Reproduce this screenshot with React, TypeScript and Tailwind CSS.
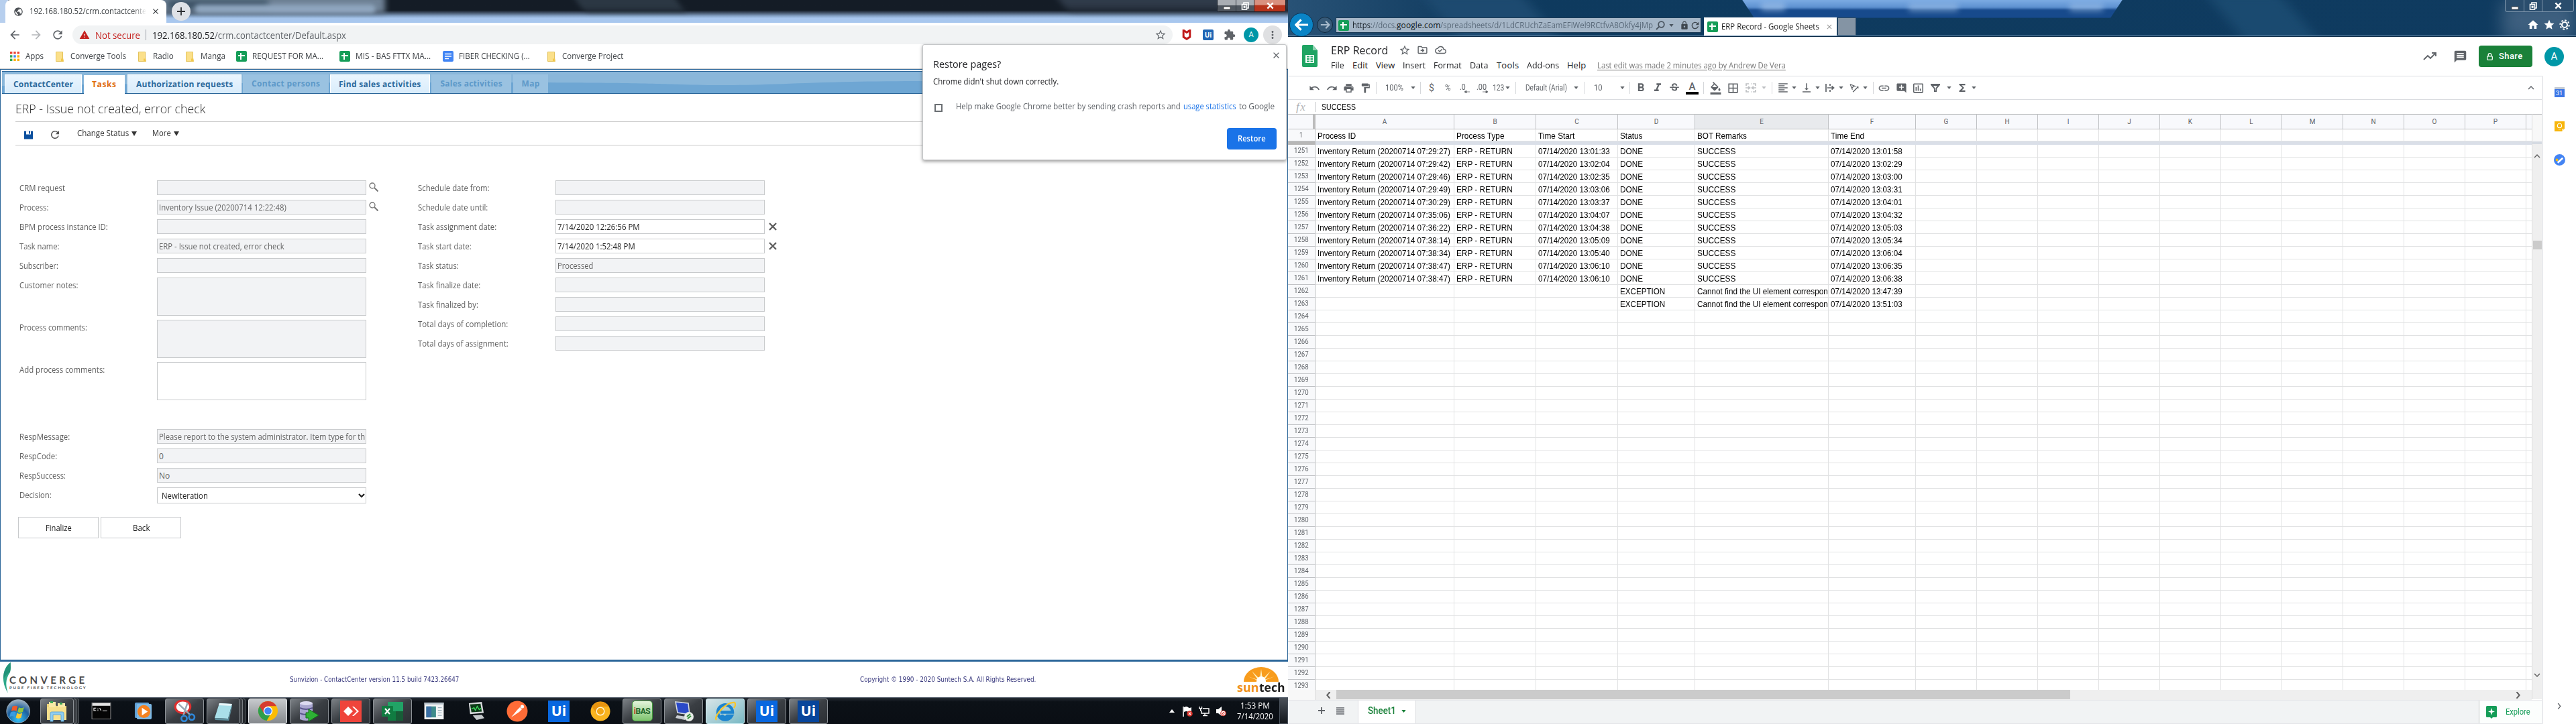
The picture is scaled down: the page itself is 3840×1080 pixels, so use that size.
import { useLayoutEffect, useRef, useState, type ReactNode } from "react";
import {
  MdAddComment,
  MdArrowBack,
  MdArrowForward,
  MdBorderAll,
  MdClose,
  MdComment,
  MdExtension,
  MdFormatAlignLeft,
  MdFormatBold,
  MdFormatColorFill,
  MdFormatItalic,
  MdFormatPaint,
  MdFunctions,
  MdHome,
  MdInsertChartOutlined,
  MdKeyboardArrowDown,
  MdKeyboardArrowUp,
  MdLink,
  MdLock,
  MdMoreVert,
  MdOutlineCloudDone,
  MdOutlineDriveFileMove,
  MdPrint,
  MdPublic,
  MdRedo,
  MdRefresh,
  MdStar,
  MdStarBorder,
  MdStrikethroughS,
  MdTextRotationAngleup,
  MdUndo,
  MdVerticalAlignBottom,
  MdWarning,
} from "react-icons/md";

/* Text run that is measured and condensed, or tracked out, to fill a given width. */
function T({ w, children, className = "" }: { w: number; children: string; className?: string }) {
  const ref = useRef<HTMLSpanElement>(null);
  const [natural, setNatural] = useState(0);
  useLayoutEffect(() => {
    if (ref.current) setNatural(ref.current.offsetWidth);
  }, [children]);
  const fit =
    natural > w
      ? { transform: `scaleX(${w / natural})` }
      : natural > 0
        ? { letterSpacing: (w - natural) / Math.max(1, children.length) }
        : undefined;
  return (
    <span className={`block shrink-0 whitespace-pre ${className}`} style={{ width: w }}>
      <span ref={ref} className="inline-block origin-left" style={fit}>
        {children}
      </span>
    </span>
  );
}

const Folder = () => (
  <svg viewBox="0 0 12 15" className="h-[15px] w-3 shrink-0">
    <path d="M0.5 0.5h10v11l1 3h-11z" fill="#fbe08a" stroke="#e3c25a" />
    <path d="M8 14.5v-4h3.5v4z" fill="#f2c84b" />
  </svg>
);
const SheetIcon = () => (
  <svg viewBox="0 0 16 16" className="size-4 shrink-0">
    <rect width="16" height="16" rx="2" fill="#159d58" />
    <path d="M7 3v10M3 7h10" stroke="#fff" strokeWidth="2" />
  </svg>
);
const DocIcon = () => (
  <svg viewBox="0 0 16 16" className="size-4 shrink-0">
    <rect width="16" height="16" rx="2" fill="#4285f4" />
    <path d="M3 4.5h10M3 8h10M3 11.5h6" stroke="#fff" strokeWidth="1.6" />
  </svg>
);
const UiIcon = ({ className }: { className: string }) => (
  <span className={`flex shrink-0 items-center justify-center font-['Open_Sans',sans-serif] font-bold text-white ${className}`}>Ui</span>
);

/* ---------- Chrome window ---------- */

function WindowButtons({ red }: { red: boolean }) {
  return (
    <div
      className={`flex h-[18px] w-[103px] overflow-hidden rounded-b-[4px] border border-t-0 ${
        red ? "border-[#1b222c] bg-[#8b9199]" : "border-[#7f97ad] bg-[#2a4d6d]"
      }`}
    >
      <span className={`flex w-[28px] items-center justify-center border-r ${red ? "border-[#30363e] bg-linear-to-b from-[#a9adb3] from-45% to-[#4f565f] to-50%" : "border-[#7f97ad]"}`}>
        <svg viewBox="0 0 12 12" className="size-3">
          <rect x="1" y="7" width="10" height="4" fill="#fff" stroke="#444" strokeWidth=".8" />
        </svg>
      </span>
      <span className={`flex w-[27px] items-center justify-center border-r ${red ? "border-[#30363e] bg-linear-to-b from-[#a9adb3] from-45% to-[#4f565f] to-50%" : "border-[#7f97ad]"}`}>
        <svg viewBox="0 0 12 12" className="size-3" fill="none" stroke="#fff" strokeWidth="1.6">
          <path d="M4 3V1h7v8H9" />
          <rect x="1.5" y="3.5" width="7" height="7.5" />
          <rect x="4.4" y="6.4" width="1.4" height="1.6" />
        </svg>
      </span>
      <span className={`flex flex-1 items-center justify-center ${red ? "bg-linear-to-b from-[#d9907f] from-40% to-[#b7331b] to-50%" : ""}`}>
        <svg viewBox="0 0 12 12" className="size-[11px]">
          <path d="M1.5 1.5l9 9M10.500 1.500l-9 9" stroke="#fff" strokeWidth="2.6" />
        </svg>
      </span>
    </div>
  );
}

function ChromeTitle() {
  return (
    <div className="relative flex h-[34px] overflow-hidden bg-linear-to-b from-[#141c26] from-45% via-[#86a3c6] via-70% to-[#a8c7ee] to-80%">
      <div className="absolute -left-4 -top-2 h-[28px] w-[590px] bg-[#6f8296] blur-[4px]" />
      <div className="absolute left-[250px] top-0 h-[14px] w-[150px] bg-[#3a5164] blur-[5px]" />
      <div className="absolute left-[290px] top-[7px] h-[13px] w-[270px] rounded-full bg-[#8fa6bf] blur-[3px]" />
      <div className="absolute -top-3 left-[860px] h-[28px] w-[150px] skew-x-[35deg] bg-[#2b3743] blur-[5px]" />
      <div className="absolute -top-3 left-[1580px] h-[26px] w-[340px] skew-x-[35deg] bg-[#303b4a] blur-[6px]" />
      <div className="absolute -left-2 top-0 h-[34px] w-[20px] bg-[#b7cfee]" />
      <div className="relative ml-2 flex w-[240px] items-center rounded-t-[8px] bg-white pl-3">
        <MdPublic className="size-[15px] text-[#4d5156]" />
        <div className="relative ml-[9px]">
          <T w={174} className="text-[12px] text-[#3c4043]">192.168.180.52/crm.contactcente</T>
          <div className="absolute right-0 top-0 h-full w-5 bg-linear-to-r from-transparent to-white" />
        </div>
        <MdClose className="ml-[7px] size-[14px] text-[#3c4043]" />
      </div>
      <span className="relative ml-2 mt-[3px] flex size-7 items-center justify-center rounded-full bg-[#dfe2e7]">
        <svg viewBox="0 0 12 12" className="size-3">
          <path d="M6 0v12M0 6h12" stroke="#2b2e31" strokeWidth="1.8" />
        </svg>
      </span>
      <div className="relative ml-auto mr-[3px]">
        <WindowButtons red />
      </div>
    </div>
  );
}

function ChromeToolbar() {
  return (
    <div className="flex h-8 items-center bg-white pl-3 pt-1 text-[#5f6368]">
      <MdArrowBack className="size-5" />
      <MdArrowForward className="ml-3 size-5 text-[#b4b6b9]" />
      <MdRefresh className="ml-3 size-5" />
      <div className="ml-3 flex h-7 w-[1640px] items-center rounded-full bg-[#f1f3f4] pl-[10px] text-[14px]">
        <MdWarning className="size-4 text-[#c5221f]" />
        <T w={67} className="ml-2 text-[#c5221f]">Not secure</T>
        <span className="ml-2 h-4 w-px bg-[#9aa0a6]" />
        <T w={93} className="ml-[9px] text-[#202124]">192.168.180.52</T>
        <T w={196}>/crm.contactcenter/Default.aspx</T>
        <MdStarBorder className="ml-auto mr-[9px] size-[18px]" />
      </div>
      <svg viewBox="0 0 16 18" className="ml-[14px] h-[16px] w-[14px]">
        <path d="M2.500 1v11.500l5.500 3.500 5.500-3.500V1L8 5z" fill="none" stroke="#c01818" strokeWidth="3.4" />
      </svg>
      <UiIcon className="ml-[17px] size-4 rounded-[2px] bg-[#1f66b5] text-[10px]" />
      <MdExtension className="ml-[15px] size-[18px]" />
      <span className="ml-3 flex size-[22px] items-center justify-center rounded-full bg-[#0097a7] font-['Roboto',sans-serif] text-[11px] text-white">A</span>
      <span className="ml-[7px] flex size-7 items-center justify-center rounded-full bg-[#dfe0e2]">
        <MdMoreVert className="size-[18px]" />
      </span>
    </div>
  );
}

function Bookmarks() {
  return (
    <div className="flex h-9 shrink-0 items-center bg-white pl-[15px] text-[12px] text-[#3f4347]">
      <svg viewBox="0 0 14 14" className="size-[14px]">
        <g fill="#ea4335"><rect width="3.400" height="3.400" /><rect x="5.300" width="3.400" height="3.400" /><rect x="10.600" width="3.400" height="3.400" /></g>
        <rect y="5.300" width="3.400" height="3.400" fill="#34a853" />
        <rect x="5.300" y="5.300" width="3.400" height="3.400" fill="#4285f4" />
        <rect x="10.600" y="5.300" width="3.400" height="3.400" fill="#fbaf04" />
        <rect y="10.600" width="3.400" height="3.400" fill="#34a853" />
        <rect x="5.300" y="10.600" width="3.400" height="3.400" fill="#fbaf04" />
        <rect x="10.600" y="10.600" width="3.400" height="3.400" fill="#fbaf04" />
      </svg>
      <T w={27} className="ml-[9px]">Apps</T>
      <span className="ml-[18px]"><Folder /></span>
      <T w={83} className="ml-[10px]">Converge Tools</T>
      <span className="ml-[18px]"><Folder /></span>
      <T w={31} className="ml-[10px]">Radio</T>
      <span className="ml-[18px]"><Folder /></span>
      <T w={37} className="ml-[10px]">Manga</T>
      <span className="ml-4"><SheetIcon /></span>
      <T w={106} className="ml-2">REQUEST FOR MA...</T>
      <span className="ml-6"><SheetIcon /></span>
      <T w={112} className="ml-2">MIS - BAS FTTX MA...</T>
      <span className="ml-[18px]"><DocIcon /></span>
      <T w={106} className="ml-2">FIBER CHECKING (...</T>
      <span className="ml-[26px]"><Folder /></span>
      <T w={91} className="ml-[10px]">Converge Project</T>
    </div>
  );
}

function RestorePopup() {
  return (
    <div className="absolute left-[1375px] top-[66px] flex h-[173px] w-[543px] flex-col rounded-[3px] border border-[#c4c6c8] bg-white pl-[15px] text-[#202124] shadow-[0_2px_5px_rgba(0,0,0,0.4)]">
      <MdClose className="absolute right-[7px] top-2 size-[15px] text-[#5f6368]" />
      <T w={101} className="mt-[16px] text-[15px] leading-6">Restore pages?</T>
      <T w={187} className="mt-[5px] text-[12.5px] leading-5">Chrome didn't shut down correctly.</T>
      <div className="mt-[17px] flex items-center text-[12px] leading-5 text-[#5f6368]">
        <span className="ml-[2px] mt-1 h-[12px] w-[12px] border-2 border-[#6b6f73]" />
        <T w={335} className="ml-5">Help make Google Chrome better by sending crash reports and</T>
        <T w={79} className="ml-1 text-[#1a73e8]">usage statistics</T>
        <T w={53} className="ml-1">to Google</T>
      </div>
      <button className="ml-[438px] mt-[22px] flex h-8 w-[74px] items-center justify-center rounded-[4px] bg-[#1a73e8] text-[12px] font-semibold text-white">
        <T w={42}>Restore</T>
      </button>
    </div>
  );
}

/* ---------- ContactCenter page ---------- */

const navOn = "bg-linear-to-b from-[#eaf5fe] to-[#d9ecfb] text-[#2c6a9c] border border-b-0 border-white h-[28px]";
const navOff = "bg-[#9ac2e1] text-[#5d99c9] h-[28px]";

function NavTabs() {
  return (
    <div className="relative mx-[2px] mt-[2px] flex h-[34px] items-end border-y border-[#2b6699] bg-[#8ab7da] pl-1 text-[12px] font-bold">
      <svg viewBox="0 0 1915 32" preserveAspectRatio="none" className="absolute left-0 top-0 h-8 w-full">
        <path d="M0 21C300 16 500 16 750 16S1000 20 1080 20s130-6 300-6 300 4 535 4V32H0z" fill="#6ea6d3" />
      </svg>
      <span className={`relative flex w-[115px] items-center justify-center ${navOn}`}><T w={89}>ContactCenter</T></span>
      <span className="relative -mb-px ml-[3px] flex h-[28px] w-[61px] items-center justify-center bg-white text-[#e06c10]"><T w={37}>Tasks</T></span>
      <span className={`relative ml-1 flex w-[170px] items-center justify-center ${navOn}`}><T w={144}>Authorization requests</T></span>
      <span className={`relative ml-[2px] flex w-[128px] items-center justify-center ${navOff}`}><T w={102}>Contact persons</T></span>
      <span className={`relative ml-[2px] flex w-[149px] items-center justify-center ${navOn}`}><T w={123}>Find sales activities</T></span>
      <span className={`relative ml-[2px] flex w-[119px] items-center justify-center ${navOff}`}><T w={92}>Sales activities</T></span>
      <span className={`relative ml-[3px] flex w-[52px] items-center justify-center ${navOff}`}><T w={27}>Map</T></span>
    </div>
  );
}

function Field({ label, lw, value, vw = 0, kind = "ro", after }: { label: string; lw: number; value?: string; vw?: number; kind?: "ro" | "rw" | "area" | "areaRw" | "select"; after?: ReactNode }) {
  const tall = kind === "area" || kind === "areaRw";
  const white = kind === "rw" || kind === "areaRw" || kind === "select";
  return (
    <div className={`flex items-start ${tall ? "mb-[6px] h-[57px]" : kind === "select" ? "h-6" : "mb-[7px] h-[22px]"}`}>
      <div className="w-[205px] leading-[23px] text-[#5e5e5e]"><T w={lw}>{label}</T></div>
      <div
        className={`flex h-full w-[312px] overflow-hidden border border-[#c8cacc] pl-[2px] pr-px leading-[21px] ${
          white ? "bg-white text-[#1c1c1c]" : "bg-[#f2f3f5] text-[#646464]"
        } ${kind === "select" ? "items-center pl-[6px] pr-[5px]" : ""}`}
      >
        {value && <T w={vw}>{value}</T>}
        {kind === "select" && (
          <svg viewBox="0 0 10 7" className="ml-auto h-[7px] w-[10px]"><path d="M1 1l4 4 4-4" fill="none" stroke="#1c1c1c" strokeWidth="2.2" /></svg>
        )}
      </div>
      {after}
    </div>
  );
}

const Glass = () => (
  <svg viewBox="0 0 14 14" className="ml-1 mt-[3px] size-[14px]" fill="none" stroke="#777">
    <circle cx="5" cy="5" r="4" strokeWidth="1.300" />
    <path d="M8 8l5.500 5.500" strokeWidth="2" />
  </svg>
);
const Cross = () => (
  <svg viewBox="0 0 12 12" className="ml-[6px] mt-[5px] size-[12px]"><path d="M1 1l10 10M11 1L1 11" stroke="#5e5e5e" strokeWidth="2.400" /></svg>
);

function TaskPage() {
  return (
    <div className="flex h-[884px] flex-col border border-b-[3px] border-[#2b6699] bg-white">
      <NavTabs />
      <div className="mx-[22px] flex h-[41px] items-center pt-[4px] text-[18px] font-light text-[#2e2e2e]">
        <T w={283}>ERP - Issue not created, error check</T>
      </div>
      <div className="mx-[22px] flex h-9 items-center border-y border-[#cacaca] pl-[13px] text-[12px] text-[#333]">
        <svg viewBox="0 0 13 12" className="mt-1 h-[13px] w-[13px]"><path d="M0 0h13v12H0z" fill="#0b4f9e" /><path d="M3 0h7v5H3z" fill="#fff" /><path d="M7 0h2v4H7z" fill="#0b4f9e" /></svg>
        <MdRefresh className="ml-6 mt-1 size-[18px] text-[#555]" />
        <T w={77} className="ml-6">Change Status</T>
        <svg viewBox="0 0 8 7" className="ml-1 h-[7px] w-2"><path d="M0 0h8L4 7z" fill="#333" /></svg>
        <T w={28} className="ml-[23px]">More</T>
        <svg viewBox="0 0 8 7" className="ml-1 h-[7px] w-2"><path d="M0 0h8L4 7z" fill="#333" /></svg>
      </div>
      <div className="ml-7 mt-[52px] flex text-[12px]">
        <div className="w-[594px]">
          <Field label="CRM request" lw={68} after={<Glass />} />
          <Field label="Process:" lw={43} value="Inventory Issue (20200714 12:22:48)" vw={190} after={<Glass />} />
          <Field label="BPM process instance ID:" lw={132} />
          <Field label="Task name:" lw={59} value="ERP - Issue not created, error check" vw={187} />
          <Field label="Subscriber:" lw={58} />
          <Field label="Customer notes:" lw={87} kind="area" />
          <Field label="Process comments:" lw={101} kind="area" />
          <Field label="Add process comments:" lw={127} kind="areaRw" />
          <div className="mt-[43px]">
            <Field label="RespMessage:" lw={75} value="Please report to the system administrator. Item type for th" vw={307} />
            <Field label="RespCode:" lw={56} value="0" vw={7} />
            <Field label="RespSuccess:" lw={69} value="No" vw={16} />
            <Field label="Decision:" lw={48} value="NewIteration" vw={69} kind="select" />
          </div>
          <div className="-ml-[2px] mt-5 flex gap-[3px] text-[#1c1c1c]">
            <button className="flex h-8 w-[120px] items-center justify-center border border-[#c8cacc] pt-[2px]"><T w={39}>Finalize</T></button>
            <button className="flex h-8 w-[120px] items-center justify-center border border-[#c8cacc] pt-[2px]"><T w={25}>Back</T></button>
          </div>
        </div>
        <div>
          <Field label="Schedule date from:" lw={107} />
          <Field label="Schedule date until:" lw={104} />
          <Field label="Task assignment date:" lw={117} value="7/14/2020 12:26:56 PM" vw={123} kind="rw" after={<Cross />} />
          <Field label="Task start date:" lw={80} value="7/14/2020 1:52:48 PM" vw={116} kind="rw" after={<Cross />} />
          <Field label="Task status:" lw={61} value="Processed" vw={53} />
          <Field label="Task finalize date:" lw={93} />
          <Field label="Task finalized by:" lw={90} />
          <Field label="Total days of completion:" lw={134} />
          <Field label="Total days of assignment:" lw={135} />
        </div>
      </div>
    </div>
  );
}

function PageFooter() {
  return (
    <div className="flex h-[53px] items-start bg-white font-['DejaVu_Sans_Condensed','DejaVu_Sans',sans-serif] text-[10.500px] text-[#39397e]">
      <svg viewBox="0 0 15 48" className="ml-[2px] mt-[1px] h-[46px] w-[15px]">
        <path d="M14 0C2 8-2 30 10 48 6 36 6 26 13 16 15 10 14 5 14 0z" fill="#2fa98a" />
        <path d="M14 0C6 6 2 18 3 26c3-6 7-9 10-11 2-5 1-10 1-15z" fill="#157e68" opacity=".5" />
      </svg>
      <div className="-ml-[3px] mt-[20px] flex w-[114px] flex-col text-[#4a4a4a]">
        <T w={116} className="font-['Lato',sans-serif] text-[15px] font-bold leading-[15px]">CONVERGE</T>
        <T w={116} className="font-['Lato',sans-serif] text-[6px] font-bold leading-[7px]">PURE FIBER TECHNOLOGY</T>
      </div>
      <T w={252} className="ml-[304px] mt-[19px]">Sunvizion - ContactCenter version 11.5 build 7423.26647</T>
      <T w={262} className="ml-[598px] mt-[19px]">Copyright © 1990 - 2020 Suntech S.A. All Rights Reserved.</T>
      <div className="ml-auto mr-1 mt-2 flex flex-col items-center">
        <svg viewBox="0 0 52 22" className="h-[22px] w-[52px]">
          <path d="M0 22a26 22 0 0 1 52 0z" fill="#f89c1c" />
          <path d="M26 22L6 14l15 5L12 6l12 12 2-15 2 15L40 6l-9 13 15-5z" fill="#fff3c4" />
          <circle cx="26" cy="21" r="7" fill="#fff" />
        </svg>
        <div className="-mt-[2px] flex font-['Open_Sans',sans-serif] text-[18px] font-bold leading-[20px]">
          <T w={33} className="text-[#f0901a]">sun</T>
          <T w={39} className="text-[#1c1c1c]">tech</T>
        </div>
      </div>
    </div>
  );
}

/* ---------- Windows 7 taskbar ---------- */

function Slot({ mode = "none", stack = false, children }: { mode?: "none" | "open" | "active" | "ie"; stack?: boolean; children: ReactNode }) {
  const look =
    mode === "active"
      ? "border border-[#e8ebee] bg-linear-to-b from-[#c7cacd] to-[#85898d]"
      : mode === "ie"
        ? "border border-[#cfeef4] bg-linear-to-br from-[#d7e4e8] to-[#79b9c4]"
        : mode === "open"
          ? "border border-[#8c9196] bg-linear-to-br from-[#7c8186] via-[#3a3e43] via-50% to-[#2b2f34]"
          : "";
  return (
    <div className="flex h-[38px] w-[58px] shrink-0">
      <div className={`flex flex-1 items-center justify-center rounded-[3px] ${look}`}>{children}</div>
      {stack && (
        <>
          <div className="w-1 rounded-r-[3px] border border-l-0 border-[#777c81] bg-[#3a3e43]" />
          <div className="w-1 rounded-r-[3px] border border-l-0 border-[#5b6065] bg-[#24282d]" />
        </>
      )}
    </div>
  );
}

function Taskbar() {
  return (
    <div className="flex h-10 items-center gap-1 overflow-hidden border-t border-[#5b6470] bg-linear-to-b from-[#272d36] from-0% via-[#0c1117] via-15% to-[#0a0e14] pl-[6px]">
      <div className="mr-[6px] w-11 shrink-0">
        <svg viewBox="0 0 44 44" className="h-[38px] w-11">
          <defs>
            <radialGradient id="orb" cx="50%" cy="85%" r="80%">
              <stop offset="0" stopColor="#35c0f4" />
              <stop offset=".6" stopColor="#1c5f9e" />
              <stop offset="1" stopColor="#93a9bd" />
            </radialGradient>
          </defs>
          <circle cx="21" cy="22" r="20" fill="url(#orb)" stroke="#a7bccb" />
          <path d="M11 14q5-3 9 0l-2 8q-4-3-9 0z" fill="#ef5a2a" />
          <path d="M22 15q4 3 9 0l-2 8q-5 3-9 0z" fill="#8fc63d" />
          <path d="M8 24q5-3 9 0l-2 8q-4-3-9 0z" fill="#3a9be0" />
          <path d="M19 25q4 3 9 0l-2 8q-5 3-9 0z" fill="#fdc82f" />
        </svg>
      </div>
      <Slot mode="open" stack>
        <svg viewBox="0 0 32 32" className="size-8">
          <path d="M1 5h12l2 3h15v21H1z" fill="#f0d57b" />
          <path d="M4 2h10v8H4zM17 4h11v8H17z" fill="#f9e9a6" />
          <path d="M6 1h4v3H6zM20 3h4v3h-4z" fill="#3aa655" />
          <path d="M1 10h29v19H1z" fill="#f7e08c" />
          <path d="M6 31V19q0-2 2-2h16q2 0 2 2v12h-4V21H10v10z" fill="#8fcdf0" stroke="#5fa8d8" />
        </svg>
      </Slot>
      <Slot>
        <svg viewBox="0 0 30 26" className="h-[25px] w-[30px]">
          <rect x=".5" y=".5" width="29" height="25" fill="#050505" stroke="#8d8d8d" />
          <rect x="1" y="1" width="28" height="4" fill="#e3e3e3" />
          <path d="M7 8.500H3.500v4H7M9 10h1.500M9 12.500h1.500M12.500 8.500l2 4M17 13h7" stroke="#fff" strokeWidth="1.100" fill="none" />
        </svg>
      </Slot>
      <Slot>
        <svg viewBox="0 0 28 28" className="size-[27px]">
          <rect x="1" y="1" width="22" height="24" rx="2" fill="#5f9fd4" />
          <rect x="4" y="3" width="23" height="24" rx="2" fill="#7db8e4" />
          <circle cx="15" cy="15" r="10" fill="#f58220" />
          <path d="M12 9l9 6-9 6z" fill="#fff" />
        </svg>
      </Slot>
      <Slot mode="open">
        <svg viewBox="0 0 32 32" className="size-[33px]">
          <ellipse cx="13" cy="10" rx="11" ry="9" fill="#fff" stroke="#dd2f2f" strokeWidth="3" />
          <path d="M7 6l17 16M20 4L14 22" stroke="#9aa7b2" strokeWidth="2.400" />
          <circle cx="26" cy="25" r="4" fill="none" stroke="#2f86d6" strokeWidth="2.600" />
          <circle cx="15" cy="27" r="4" fill="none" stroke="#2f86d6" strokeWidth="2.600" />
        </svg>
      </Slot>
      <Slot mode="open" stack>
        <svg viewBox="0 0 30 30" className="size-[30px]">
          <path d="M9 3l19 1-6 22-20-1z" fill="#a9dfe9" />
          <path d="M9 3l19 1-1 3-19-1z" fill="#e9f5f8" />
          <path d="M2 25l20 1 6-22v4l-5 21-20-1z" fill="#5b8e9c" />
        </svg>
      </Slot>
      <Slot mode="active">
        <svg viewBox="0 0 32 32" className="size-[31px]">
          <circle cx="16" cy="16" r="15" fill="#fbbc05" />
          <path d="M16 16L3 8.500A15 15 0 0 0 14 31l7-12z" fill="#2f9e4b" />
          <path d="M3 8.500l6.500 11 6-11H29A15 15 0 0 0 3 8.500z" fill="#d63b2f" />
          <circle cx="16" cy="16" r="7" fill="#fff" />
          <circle cx="16" cy="16" r="5.500" fill="#4285f4" />
        </svg>
      </Slot>
      <Slot mode="open">
        <svg viewBox="0 0 32 32" className="size-8">
          <path d="M2 4v24q9 4 19 0V4z" fill="#a9a6cf" />
          <ellipse cx="11.500" cy="4" rx="9.500" ry="3" fill="#dcdaf0" />
          <path d="M2 11q9 4 19 0M2 19q9 4 19 0" stroke="#5a568c" strokeWidth="2" fill="none" />
          <path d="M15 13l15 9-15 9v-5h-4v-8h4z" fill="#2eb135" stroke="#127018" />
        </svg>
      </Slot>
      <Slot mode="open">
        <svg viewBox="0 0 32 32" className="size-8">
          <rect width="32" height="32" fill="#ef443b" />
          <path d="M12 9l7 7-7 7-7-7zM18 9l2.500 0L28 16l-7.500 7H18l7-7z" fill="#fff" />
        </svg>
      </Slot>
      <Slot mode="open">
        <svg viewBox="0 0 32 30" className="h-[30px] w-8">
          <rect x="9" y="1" width="23" height="28" rx="1" fill="#21a366" />
          <path d="M9 15h12v14H9z" fill="#107c41" /><path d="M21 15h11v14H21z" fill="#185c37" />
          <rect y="7" width="17" height="16" rx="1" fill="#107c41" />
          <path d="M5 11l7 8M12 11l-7 8" stroke="#fff" strokeWidth="2.200" />
        </svg>
      </Slot>
      <Slot>
        <svg viewBox="0 0 30 26" className="h-[25px] w-[30px]">
          <rect width="30" height="26" fill="#f2f4f5" /><rect width="30" height="3" fill="#b8c3cc" />
          <rect x="3" y="6" width="15" height="17" fill="#3e8b8b" /><rect x="3" y="6" width="8" height="17" fill="#3a6ea5" />
          <path d="M21 8h6M21 12h6M21 16h6M21 20h6" stroke="#8aa0b0" />
        </svg>
      </Slot>
      <Slot>
        <svg viewBox="0 0 30 30" className="size-[29px]">
          <path d="M4 3l20-2 3 17-21 2z" fill="#d7dadc" /><path d="M6 5l16-1 2 12-16 1z" fill="#0d3b18" />
          <path d="M8 12l4-2 2 4 3-6 3 5 3-2" stroke="#3edc5c" fill="none" strokeWidth="1.400" />
          <path d="M10 22l14-1 4 5-12 3z" fill="#c4c8cb" />
        </svg>
      </Slot>
      <Slot>
        <svg viewBox="0 0 32 32" className="size-8">
          <circle cx="16" cy="16" r="15.500" fill="#ff6c37" />
          <path d="M7 25l9-11 3 3zM16 14l4-4 3 3-4 4z" fill="#fff" /><circle cx="23.500" cy="9" r="2.600" fill="#fff" />
        </svg>
      </Slot>
      <Slot><UiIcon className="size-8 bg-[#0867df] text-[21px]" /></Slot>
      <Slot>
        <svg viewBox="0 0 32 32" className="size-[30px]">
          <circle cx="16" cy="16" r="15.500" fill="#f9b41f" />
          <path d="M16 8.500h13.500A15.500 15.500 0 0 0 2.600 8.500l7 11z" fill="#e79410" />
          <circle cx="16" cy="16" r="7" fill="#fff3d0" /><circle cx="16" cy="16" r="5.400" fill="#f2a614" />
        </svg>
      </Slot>
      <Slot mode="open">
        <span className="flex size-[31px] items-center justify-center rounded-[5px] border border-[#3f9a3a] bg-linear-to-b from-[#e4f5dc] to-[#7cc36c] font-['Roboto',sans-serif] text-[12px] font-bold tracking-[-0.500px] text-[#22662a]">
          <span className="text-[#c0392b]">i</span>BAS
        </span>
      </Slot>
      <Slot mode="open">
        <svg viewBox="0 0 32 32" className="size-8">
          <path d="M4 2l19 2 2 17-18-3z" fill="#2a49c8" stroke="#d5dae0" strokeWidth="1.600" />
          <path d="M6 22l14 2-2 5-14-3z" fill="#c9cdd2" />
          <circle cx="24" cy="24" r="7" fill="#e6ebe6" /><path d="M21 24l5-4M22 27l5-4" stroke="#2f8d35" strokeWidth="2" />
        </svg>
      </Slot>
      <Slot mode="ie">
        <svg viewBox="0 0 32 32" className="size-8" fill="none">
          <path d="M9 17.500h18A11 11 0 1 0 25.500 23H19a4.500 4.500 0 0 1-8-2" stroke="#1c84cf" strokeWidth="4.500" />
          <path d="M3 29C-2 24 18 1 30 3c3 3-1 8-1 8" stroke="#f7c52c" strokeWidth="2.400" />
        </svg>
      </Slot>
      <Slot mode="open"><UiIcon className="size-8 bg-[#0867df] text-[21px]" /></Slot>
      <Slot mode="open"><UiIcon className="size-8 bg-[#07459b] text-[21px]" /></Slot>
      <div className="ml-auto flex h-full items-center text-white">
        <svg viewBox="0 0 8 5" className="h-[5px] w-2"><path d="M0 5l4-5 4 5z" fill="#fff" /></svg>
        <svg viewBox="0 0 16 16" className="ml-[11px] size-[16px]">
          <path d="M2 1v15" stroke="#fff" strokeWidth="1.600" /><path d="M3 2q4-2 6 0t5 0v7q-3 2-5 0T3 9z" fill="#fff" />
          <circle cx="11.500" cy="11.500" r="4.300" fill="#d8322a" /><path d="M9.800 9.800l3.400 3.400M13.200 9.800l-3.400 3.400" stroke="#fff" strokeWidth="1.200" />
        </svg>
        <svg viewBox="0 0 16 16" className="ml-[9px] size-[16px]" fill="none" stroke="#fff" strokeWidth="1.400">
          <path d="M6 4h9v7H4V7M9 11v3M6 14.500h7M1 1v3h3.500V1M2.700 4v4" />
        </svg>
        <svg viewBox="0 0 16 16" className="ml-[9px] size-[16px]">
          <path d="M1 5h3l5-4v14l-5-4H1z" fill="#fff" /><circle cx="11.500" cy="11" r="4.300" fill="#d8322a" /><circle cx="11.500" cy="11" r="2.600" fill="none" stroke="#fff" strokeWidth="1.100" /><path d="M9.700 9.200l3.600 3.600" stroke="#fff" strokeWidth="1.100" />
        </svg>
        <div className="ml-[15px] flex w-[55px] flex-col items-center text-[12px] leading-[16px]">
          <T w={44}>1:53 PM</T>
          <T w={54}>7/14/2020</T>
        </div>
        <div className="ml-[9px] h-full w-[13px] border border-[#4a525c] bg-linear-to-b from-[#4a5058] to-[#14181d]" />
      </div>
    </div>
  );
}

function LeftScreen() {
  return (
    <div className="relative flex h-[1080px] w-[1920px] shrink-0 flex-col overflow-hidden bg-white">
      <ChromeTitle />
      <ChromeToolbar />
      <Bookmarks />
      <div className="h-px bg-[#c9cbcd]" />
      <TaskPage />
      <PageFooter />
      <Taskbar />
      <RestorePopup />
    </div>
  );
}

/* ---------- Internet Explorer window ---------- */

function IeChrome() {
  return (
    <div className="relative flex h-[55px] items-end overflow-hidden border-b border-[#0c2c48] bg-linear-to-r from-[#285276] via-[#0e3a5e] via-15% to-[#0f3b60]">
      <div className="absolute -top-4 left-[230px] h-[90px] w-[150px] skew-x-[40deg] bg-[#1d4a70] blur-[10px]" />
      <div className="absolute -top-4 left-[1400px] h-[90px] w-[110px] skew-x-[40deg] bg-[#1a4a70] blur-[10px]" />
      <div className="absolute -top-2 left-[672px] h-[35px] w-[577px] bg-linear-to-b from-[#7aaae2] from-25% via-[#5c90d0] via-55% to-[#174a8c] to-65% [clip-path:polygon(0_0,100%_0,96%_100%,4%_100%)] blur-[1px]" />
      <div className="absolute left-[705px] top-[4px] h-3 w-[36px] rounded bg-[#a9c8ec] opacity-60 blur-[4px]" />
      <div className="absolute left-[925px] top-[5px] h-3 w-[74px] rounded bg-[#a9c8ec] opacity-50 blur-[4px]" />
      <div className="absolute left-[1165px] top-[5px] h-3 w-[50px] rounded bg-[#a9c8ec] opacity-50 blur-[4px]" />
      <div className="absolute right-0 top-0 h-[60px] w-[110px] bg-[#5d7894] opacity-60 blur-[12px]" />
      <div className="absolute right-[3px] top-0"><WindowButtons red={false} /></div>
      <div className="relative flex h-[35px] w-full items-start border-b border-[#6f93b4]">
        <span className="ml-[2px] flex size-9 items-center justify-center rounded-full border border-[#0c3455] bg-[#0a84c6]">
          <svg viewBox="0 0 22 18" className="h-[18px] w-[21px]"><path d="M10 1L2 9l8 8M2 9h19" fill="none" stroke="#fff" strokeWidth="3.400" /></svg>
        </span>
        <span className="ml-[5px] mt-[6px] flex size-[24px] items-center justify-center rounded-full border border-[#10283d] bg-[#375a78]">
          <svg viewBox="0 0 22 18" className="h-[12px] w-[15px]"><path d="M12 1l8 8-8 8M20 9H1" fill="none" stroke="#a9bccd" strokeWidth="3.200" /></svg>
        </span>
        <div className="ml-1 mt-[7px] flex h-[23px] w-[545px] items-center border border-[#1a3a56] bg-[#a6b7c8] pl-[3px] text-[12px] text-[#5a6a7a]">
          <SheetIcon />
          <T w={27} className="ml-[5px] text-[#101820]">https</T>
          <T w={39}>://docs.</T>
          <T w={65} className="text-[#101820]">google.com</T>
          <T w={317}>/spreadsheets/d/1LdCRUchZaEamEFiWel9RCtfvA8Okfy4jMp</T>
          <svg viewBox="0 0 14 14" className="ml-1 size-[14px]" fill="none" stroke="#4a5560" strokeWidth="1.800"><circle cx="8.500" cy="5.500" r="4.300" /><path d="M5.500 8.500L1 13" /></svg>
          <svg viewBox="0 0 8 5" className="ml-[6px] h-[4px] w-[7px]"><path d="M0 0h8L4 5z" fill="#4a5560" /></svg>
          <MdLock className="ml-[9px] size-[14px] text-[#3f4850]" />
          <MdRefresh className="ml-px size-[16px] text-[#3f4850]" />
        </div>
        <div className="ml-[4px] mt-[7px] flex h-[27px] w-[198px] items-center bg-white pl-[5px] text-[12px] text-[#1c1c1c]">
          <SheetIcon />
          <T w={146} className="ml-[5px]">ERP Record - Google Sheets</T>
          <MdClose className="ml-[9px] size-3 text-[#9a9a9a]" />
        </div>
        <div className="ml-px mt-[7px] h-[27px] w-[28px] border border-[#2c4a65] bg-[#8494a4]" />
        <div className="ml-auto mr-[9px] mt-[9px] flex gap-[6px] text-white">
          <MdHome className="size-[18px]" /><MdStar className="size-[18px]" />
          <svg viewBox="0 0 16 16" className="mt-px size-[16px]" fill="none" stroke="#fff"><circle cx="8" cy="8" r="4" strokeWidth="2.200" /><circle cx="8" cy="8" r="6.700" strokeWidth="2" strokeDasharray="2.600 2.660" /></svg>
        </div>
      </div>
    </div>
  );
}

function DocHeader() {
  return (
    <div className="flex h-[58px] font-['Roboto',sans-serif]">
      <svg viewBox="0 0 23 33" className="ml-[21px] mt-3 h-[33px] w-[23px]">
        <path d="M2 0h14l7 8v23a2 2 0 0 1-2 2H2a2 2 0 0 1-2-2V2a2 2 0 0 1 2-2z" fill="#1fa463" /><path d="M16 0l7 8h-7z" fill="#8ed1b1" />
        <path d="M5 15h13v12H5z" fill="#fff" /><path d="M7 17.500h4M12.500 17.500H16M7 21h4M12.500 21H16M7 24.500h4M12.500 24.500H16" stroke="#1fa463" strokeWidth="1.800" />
      </svg>
      <div className="ml-5">
        <div className="mt-[8px] flex h-[23px] items-center text-[#5f6368]">
          <T w={85} className="font-['Open_Sans',sans-serif] text-[17px] text-[#202124]">ERP Record</T>
          <MdStarBorder className="ml-4 size-[18px]" />
          <MdOutlineDriveFileMove className="ml-[9px] size-[17px]" />
          <MdOutlineCloudDone className="ml-[10px] size-[17px]" />
        </div>
        <div className="mt-[3px] flex h-[18px] items-center gap-3 font-['Open_Sans',sans-serif] text-[13px] text-[#202124]">
          <T w={20}>File</T><T w={23}>Edit</T><T w={28}>View</T><T w={34}>Insert</T><T w={42}>Format</T><T w={28}>Data</T><T w={33}>Tools</T><T w={48}>Add-ons</T><T w={28}>Help</T>
          <T w={281} className="ml-[5px] text-[12.5px] text-[#777] [&>span]:underline [&>span]:underline-offset-2">Last edit was made 2 minutes ago by Andrew De Vera</T>
        </div>
      </div>
      <div className="ml-auto mr-[18px] mt-[13px] flex h-8 items-center text-[#5f6368]">
        <svg viewBox="0 0 20 12" className="h-3 w-5" fill="none" stroke="#5f6368" strokeWidth="1.900"><path d="M1 11l6-6 4 4 8-8M13 1h6v5" /></svg>
        <MdComment className="ml-[25px] size-[21px] -scale-x-100 scale-y-100" />
        <div className="ml-[17px] flex h-8 w-[80px] items-center rounded-[4px] bg-[#1a8139] pl-3 text-[13px] font-medium text-white">
          <svg viewBox="0 0 9 11" className="h-[11px] w-[9px]"><path d="M2.200 5V3a2.300 2.300 0 0 1 4.600 0v2" fill="none" stroke="#fff" strokeWidth="1.300" /><rect x=".7" y="4.800" width="7.600" height="5.500" rx="1" fill="none" stroke="#fff" strokeWidth="1.300" /></svg>
          <T w={36} className="ml-[9px]">Share</T>
        </div>
        <span className="ml-[18px] flex size-[29px] items-center justify-center rounded-full bg-[#0097a7] text-[15px] text-white">A</span>
      </div>
    </div>
  );
}

const Sep = ({ className }: { className: string }) => <span className={`h-[18px] w-px shrink-0 bg-[#d5d7da] ${className}`} />;
const Caret = ({ className }: { className: string }) => (
  <svg viewBox="0 0 8 5" className={`h-[4px] w-[7px] shrink-0 ${className}`}><path d="M0 0h8L4 5z" fill="currentColor" /></svg>
);

function SheetToolbar() {
  return (
    <div className="flex h-[36px] w-[1869px] items-center border-y border-[#dadce0] pl-[31px] font-['Roboto',sans-serif] text-[12px] text-[#5f6368] [&>svg]:shrink-0">
      <MdUndo className="size-[17px]" />
      <MdRedo className="ml-[9px] size-[17px]" />
      <MdPrint className="ml-[8px] size-[17px]" />
      <MdFormatPaint className="ml-[8px] size-[17px]" />
      <Sep className="ml-[7px]" />
      <T w={27} className="ml-[13px]">100%</T>
      <Caret className="ml-[11px]" />
      <Sep className="ml-[7px]" />
      <T w={8} className="ml-[12px] text-[14px]">$</T>
      <T w={9} className="ml-[16px] text-[13px]">%</T>
      <span className="ml-[13px] flex w-[14px] flex-col">
        <T w={9} className="text-[13px] leading-[13px]">.0</T>
        <svg viewBox="0 0 8 4" className="ml-[7px] -mt-px h-1 w-2"><path d="M3 0L0 2l3 2zM2 2h6" fill="#5f6368" stroke="#5f6368" strokeWidth=".8" /></svg>
      </span>
      <span className="ml-[11px] flex w-[18px] flex-col">
        <T w={15} className="text-[13px] leading-[13px]">.00</T>
        <svg viewBox="0 0 8 4" className="ml-[9px] -mt-px h-1 w-2"><path d="M5 0l3 2-3 2zM0 2h6" fill="#5f6368" stroke="#5f6368" strokeWidth=".8" /></svg>
      </span>
      <T w={17} className="ml-[6px]">123</T>
      <Caret className="ml-[2px]" />
      <Sep className="ml-[8px]" />
      <T w={62} className="ml-[14px]">Default (Arial)</T>
      <Caret className="ml-[10px]" />
      <Sep className="ml-[9px]" />
      <T w={13} className="ml-[13px]">10</T>
      <Caret className="ml-[26px]" />
      <Sep className="ml-[7px]" />
      <MdFormatBold className="ml-[6px] size-[20px]" />
      <MdFormatItalic className="ml-[5px] size-[20px]" />
      <MdStrikethroughS className="ml-[6px] size-[18px]" />
      <span className="ml-[8px] flex w-[19px] shrink-0 flex-col items-center">
        <span className="text-[15px] font-medium leading-[15px]">A</span>
        <span className="h-[4px] w-full bg-black" />
      </span>
      <Sep className="ml-[7px]" />
      <MdFormatColorFill className="ml-[8px] size-[19px]" />
      <MdBorderAll className="ml-[7px] size-[19px]" />
      <svg viewBox="0 0 16 14" className="ml-[9px] h-[14px] w-4" fill="none" stroke="#bfc1c4" strokeWidth="1.700"><path d="M1 4V1h4M8 1h1M11 1h4v3M1 10v3h4M8 13h1M11 13h4v-3M0 7h6M16 7h-6M4 5l2.500 2L4 9M12 5L9.500 7l2.500 2" /></svg>
      <Caret className="ml-[8px] text-[#bfc1c4]" />
      <Sep className="ml-[8px]" />
      <MdFormatAlignLeft className="ml-[7px] size-[18px]" />
      <Caret className="ml-[4px]" />
      <MdVerticalAlignBottom className="ml-[6px] size-[18px]" />
      <Caret className="ml-[4px]" />
      <svg viewBox="0 0 14 14" className="ml-[8px] size-[14px]" fill="none" stroke="#5f6368" strokeWidth="1.700"><path d="M1 1v12M7 1v3M7 10v3M3 7h9M9.500 4.500L12.500 7l-3 2.500" /></svg>
      <Caret className="ml-[6px]" />
      <MdTextRotationAngleup className="ml-[7px] size-[18px]" />
      <Caret className="ml-[4px]" />
      <Sep className="ml-[8px]" />
      <MdLink className="ml-[6px] size-[19px]" />
      <MdAddComment className="ml-[8px] size-[17px]" />
      <MdInsertChartOutlined className="ml-[7px] size-[19px]" />
      <svg viewBox="0 0 14 12" className="ml-[9px] h-3 w-[14px]"><path d="M0 0h14v1.800L9 7.500V12H5V7.500L0 1.800z" fill="#5f6368" /><path d="M4 3.200h6L7.500 6.500V10h-1V6.500z" fill="#fff" /></svg>
      <Caret className="ml-[10px]" />
      <MdFunctions className="ml-[7px] size-[18px]" />
      <Caret className="ml-[5px]" />
      <MdKeyboardArrowUp className="ml-auto mr-[7px] size-[18px]" />
    </div>
  );
}

const COLS =
  "grid grid-cols-[41px_207px_122px_122px_115px_199px_130px_repeat(10,91px)_8px]";
const LETTERS = ["A", "B", "C", "D", "E", "F", "G", "H", "I", "J", "K", "L", "M", "N", "O", "P", ""];

const RUNS: [string, string, string][] = [
  ["07:29:27", "13:01:33", "13:01:58"],
  ["07:29:42", "13:02:04", "13:02:29"],
  ["07:29:46", "13:02:35", "13:03:00"],
  ["07:29:49", "13:03:06", "13:03:31"],
  ["07:30:29", "13:03:37", "13:04:01"],
  ["07:35:06", "13:04:07", "13:04:32"],
  ["07:36:22", "13:04:38", "13:05:03"],
  ["07:38:14", "13:05:09", "13:05:34"],
  ["07:38:34", "13:05:40", "13:06:04"],
  ["07:38:47", "13:06:10", "13:06:35"],
  ["07:38:47", "13:06:10", "13:06:38"],
];

type Cell = [string, number];
const cellsFor = (i: number): (Cell | null)[] => {
  if (i < RUNS.length) {
    const [id, start, end] = RUNS[i];
    return [
      [`Inventory Return (20200714 ${id})`, 198],
      ["ERP - RETURN", 84],
      [`07/14/2020 ${start}`, 107],
      ["DONE", 34],
      ["SUCCESS", 57],
      [`07/14/2020 ${end}`, 107],
    ];
  }
  if (i < 13)
    return [null, null, null, ["EXCEPTION", 67], ["Cannot find the UI element correspon", 195], [`07/14/2020 ${i === 11 ? "13:47:39" : "13:51:03"}`, 107]];
  return [];
};
const HEAD: Cell[] = [["Process ID", 57], ["Process Type", 72], ["Time Start", 54], ["Status", 33], ["BOT Remarks", 74], ["Time End", 50]];

function Row({ no, cells, className }: { no: string; cells: (Cell | null)[]; className: string }) {
  return (
    <div className={`${COLS} ${className}`}>
      <span className="flex items-center justify-center border-b border-r border-[#c0c2c5] bg-[#f8f9fb] pb-px font-['Roboto',sans-serif] text-[10px] text-[#5f6368]">
        <T w={no.length * 5.3}>{no}</T>
      </span>
      {LETTERS.map((_, c) => {
        const cell = cells[c];
        return (
          <span key={c} className={`overflow-hidden border-b border-[#e1e2e3] pl-[3px] leading-[20px] ${c < 16 ? "border-r" : ""}`}>
            {cell && <T w={cell[1]}>{cell[0]}</T>}
          </span>
        );
      })}
    </div>
  );
}

function Grid() {
  return (
    <div className="flex h-[873px] w-[1870px]">
      <div className="h-[859px] w-[1854px] overflow-hidden font-['Liberation_Sans',sans-serif] text-[12.5px] text-black">
        <div className={`${COLS} h-[23px] border-y border-[#bcbec0] bg-[#f8f9fc] font-['Roboto',sans-serif] text-[10px] text-[#5f6368]`}>
          <span className="border-r-[4px] border-[#bcbcbc]" />
          {LETTERS.map((l, c) => (
            <span key={c} className={`flex items-center justify-center ${c < 16 ? "border-r border-[#c0c2c5]" : ""} ${l === "E" ? "bg-[#e8eaed]" : ""}`}>{l}</span>
          ))}
        </div>
        <Row no="1" cells={HEAD} className="h-[18px]" />
        <div className="flex h-[5px] bg-[#dadfe8]"><span className="w-[41px] bg-[#b7b7b7]" /></div>
        {Array.from({ length: 43 }, (_, i) => (
          <Row key={i} no={String(1251 + i)} cells={cellsFor(i)} className="h-[19px]" />
        ))}
      </div>
      <div className="flex h-[873px] w-[15px] flex-col items-center border-l border-[#dcdcdc] bg-[#efefef]">
        <div className="h-[41px] w-full border-t border-[#bcbec0] bg-[#f8f8f8]" />
        <div className="h-[4px] w-full bg-[#d5dae2]" />
        <MdKeyboardArrowUp className="mt-[9px] size-[18px] text-[#606060]" />
        <div className="mt-[117px] h-[13px] w-[13px] bg-[#cbcbcb]" />
        <MdKeyboardArrowDown className="mt-auto mb-[27px] size-[18px] text-[#606060]" />
      </div>
    </div>
  );
}

function SheetBottom() {
  return (
    <div className="w-[1869px]">
      <div className="-mt-[14px] flex h-[15px] w-[1854px] items-center bg-[#efefef]">
        <span className="h-full w-[41px] border-r border-[#dcdcdc] bg-[#f8f8f8]" />
        <svg viewBox="0 0 8 12" className="ml-[15px] h-[10px] w-[8px]"><path d="M7 0L2 6l5 6" fill="none" stroke="#606060" strokeWidth="2.400" /></svg>
        <span className="ml-2 h-[14px] w-[1094px] self-start bg-[#cbcbcb]" />
        <svg viewBox="0 0 8 12" className="ml-auto mr-[16px] h-[10px] w-[8px]"><path d="M1 0l5 6-5 6" fill="none" stroke="#606060" strokeWidth="2.400" /></svg>
      </div>
      <div className="flex h-[36px] items-center border-y border-[#e3e4e8] bg-[#f1f3f4] font-['Roboto',sans-serif] text-[#5f6368]">
        <svg viewBox="0 0 10 10" className="ml-[45px] mb-1 size-[10px]"><path d="M5 0v10M0 5h10" stroke="#5f6368" strokeWidth="1.800" /></svg>
        <svg viewBox="0 0 12 11" className="ml-[17px] mb-1 h-[11px] w-3"><path d="M0 1h12M0 4h12M0 7h12M0 10h12" stroke="#5f6368" strokeWidth="1.700" /></svg>
        <div className="ml-5 flex h-full w-[87px] items-center border-x border-[#dcdee1] bg-white pb-[3px] pl-[14px] text-[14px] font-medium text-[#188038]">
          <T w={42}>Sheet1</T>
          <Caret className="ml-[8px]" />
        </div>
        <div className="ml-auto flex h-full w-[94px] items-center border-l border-[#c4c6c8] bg-[#fcfefd] pl-[10px] text-[12px] text-[#159d58]">
          <svg viewBox="0 0 16 19" className="h-[19px] w-4"><path d="M1.500 0h13A1.500 1.500 0 0 1 16 1.500v14a1.500 1.500 0 0 1-1.500 1.500H10l-2 2-2-2H1.500A1.500 1.500 0 0 1 0 15.500v-14A1.500 1.500 0 0 1 1.500 0z" fill="#159d58" /><path d="M8 3l1.300 4.200L13 8.500 9.300 9.800 8 14 6.700 9.800 3 8.500l3.700-1.300z" fill="#fff" /></svg>
          <T w={37} className="ml-[13px]">Explore</T>
        </div>
      </div>
    </div>
  );
}

function SidePanel() {
  return (
    <div className="flex flex-1 flex-col items-center border-l border-[#dadce0] pr-px">
      <span className="mt-[17px] flex h-[15px] w-[15px] items-center justify-center border-t-[3px] border-[#c4cbd4] bg-[#3d77e6] font-['Roboto',sans-serif] text-[9px] leading-none text-white">31</span>
      <svg viewBox="0 0 15 15" className="mt-[36px] size-[15px]"><path d="M0 0h15v11l-4 4H0z" fill="#f7b50b" /><path d="M15 11h-4v4z" fill="#fde293" /><path d="M5.800 9.500C3 7 4.500 3 7.500 3s4.500 4 1.700 6.500zM6 11.500h3" fill="none" stroke="#fff" strokeWidth="1.200" /></svg>
      <svg viewBox="0 0 18 18" className="mt-[34px] size-[17px]"><circle cx="9" cy="9" r="9" fill="#4484f3" /><path d="M6 13.500L14 6" stroke="#fff" strokeWidth="2.800" /><circle cx="4.800" cy="9" r="2" fill="#fbbc05" /></svg>
      <svg viewBox="0 0 6 10" className="mt-auto mb-[22px] h-[9px] w-[6px]"><path d="M1 0l4 5-4 5" fill="none" stroke="#5f6368" strokeWidth="1.400" /></svg>
    </div>
  );
}

function RightScreen() {
  return (
    <div className="flex h-[1080px] w-[1920px] shrink-0 flex-col overflow-hidden bg-white">
      <IeChrome />
      <DocHeader />
      <div className="flex flex-1">
        <div className="w-[1870px]">
          <SheetToolbar />
          <div className="flex h-[21px] items-center font-['Liberation_Sans',sans-serif] text-[12px] text-black">
            <T w={15} className="ml-3 font-['Liberation_Serif',serif] text-[17px] italic leading-[20px] text-[#b0b2b5]">fx</T>
            <span className="ml-[13px] h-[15px] w-px bg-[#c4c6c8]" />
            <T w={51} className="ml-[9px]">SUCCESS</T>
          </div>
          <Grid />
          <SheetBottom />
        </div>
        <SidePanel />
      </div>
    </div>
  );
}

export default function App() {
  return (
    <div className="flex h-[1080px] w-[3840px] overflow-hidden bg-white font-['Open_Sans',sans-serif] leading-normal">
      <LeftScreen />
      <RightScreen />
    </div>
  );
}
